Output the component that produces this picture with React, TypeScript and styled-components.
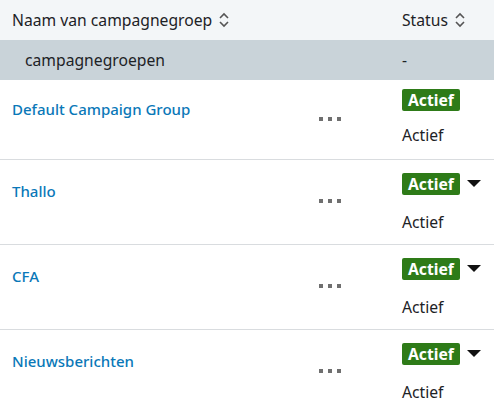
import React from "react";
import styled, { createGlobalStyle } from "styled-components";

const GlobalStyle = createGlobalStyle`
  html, body {
    margin: 0;
    padding: 0;
    background: #ffffff;
  }
  body {
    font-family: "Noto Sans", "Open Sans", sans-serif;
    font-size: 15.7px;
    color: #1d2226;
  }
`;

const Table = styled.div`
  width: 494px;
  display: grid;
  grid-template-columns: minmax(0, 1fr) 84px 122px;
`;

const HeadCell = styled.div<{ $pad?: number }>`
  height: 40px;
  display: flex;
  align-items: center;
  gap: 6px;
  padding-left: ${(p) => p.$pad ?? 12}px;
  background: #f3f6f8;
  white-space: nowrap;
`;

const GroupCell = styled.div<{ $pad?: number }>`
  height: 40px;
  display: flex;
  align-items: center;
  padding-left: ${(p) => p.$pad ?? 12}px;
  background: #c9d3d9;
`;

const Cell = styled.div<{ $last?: boolean }>`
  border-bottom: ${(p) => (p.$last ? "none" : "1px solid #d9dcdf")};
`;

const NameCell = styled(Cell)`
  display: flex;
  align-items: center;
  padding: 0 12px 22px;
`;

const Link = styled.a`
  color: #0a78b8;
  font-size: 15px;
  font-weight: 500;
  text-decoration: none;
  white-space: nowrap;
`;

const ActionCell = styled(Cell)`
  display: flex;
  align-items: center;
  justify-content: center;
  padding-bottom: 2px;
`;

const Dots = styled.span`
  display: flex;
  gap: 5px;
  span {
    width: 4px;
    height: 4px;
    background: #6f6f6f;
  }
`;

const StatusCell = styled(Cell)<{ $menu?: boolean }>`
  display: flex;
  flex-direction: column;
  align-items: flex-start;
  padding: ${(p) => (p.$menu ? "13px 0 12px 30px" : "9px 0 14px 30px")};
  gap: ${(p) => (p.$menu ? "17px" : "14px")};
`;

const BadgeLine = styled.div`
  display: flex;
  align-items: center;
  gap: 7px;
`;

const Badge = styled.span`
  display: inline-flex;
  align-items: center;
  height: 22px;
  padding: 0 6px;
  border-radius: 2px;
  background: #2e7b18;
  color: #ffffff;
  font-weight: 700;
`;

const StatusText = styled.span`
  line-height: 20px;
`;

function SortIcon() {
  return (
    <svg width="12" height="16" viewBox="0 0 12 16" fill="none">
      <path d="M2 6l4-4 4 4" stroke="#555" strokeWidth="1.6" />
      <path d="M2 10l4 4 4-4" stroke="#555" strokeWidth="1.6" />
    </svg>
  );
}

function Caret() {
  return (
    <svg width="14" height="8" viewBox="0 0 14 8">
      <path d="M0 0h14L7 7z" fill="#111" />
    </svg>
  );
}

const groups = [
  { name: "Default Campaign Group", menu: false },
  { name: "Thallo", menu: true },
  { name: "CFA", menu: true },
  { name: "Nieuwsberichten", menu: true },
];

export default function App() {
  return (
    <>
      <GlobalStyle />
      <Table>
        <HeadCell>
          Naam van campagnegroep <SortIcon />
        </HeadCell>
        <HeadCell />
        <HeadCell $pad={30}>
          Status <SortIcon />
        </HeadCell>

        <GroupCell $pad={25}>campagnegroepen</GroupCell>
        <GroupCell />
        <GroupCell $pad={30}>-</GroupCell>

        {groups.map((g, i) => {
          const last = i === groups.length - 1;
          return (
            <React.Fragment key={g.name}>
              <NameCell $last={last}>
                <Link href="#">{g.name}</Link>
              </NameCell>
              <ActionCell $last={last}>
                <Dots>
                  <span />
                  <span />
                  <span />
                </Dots>
              </ActionCell>
              <StatusCell $last={last} $menu={g.menu}>
                <BadgeLine>
                  <Badge>Actief</Badge>
                  {g.menu && <Caret />}
                </BadgeLine>
                <StatusText>Actief</StatusText>
              </StatusCell>
            </React.Fragment>
          );
        })}
      </Table>
    </>
  );
}
